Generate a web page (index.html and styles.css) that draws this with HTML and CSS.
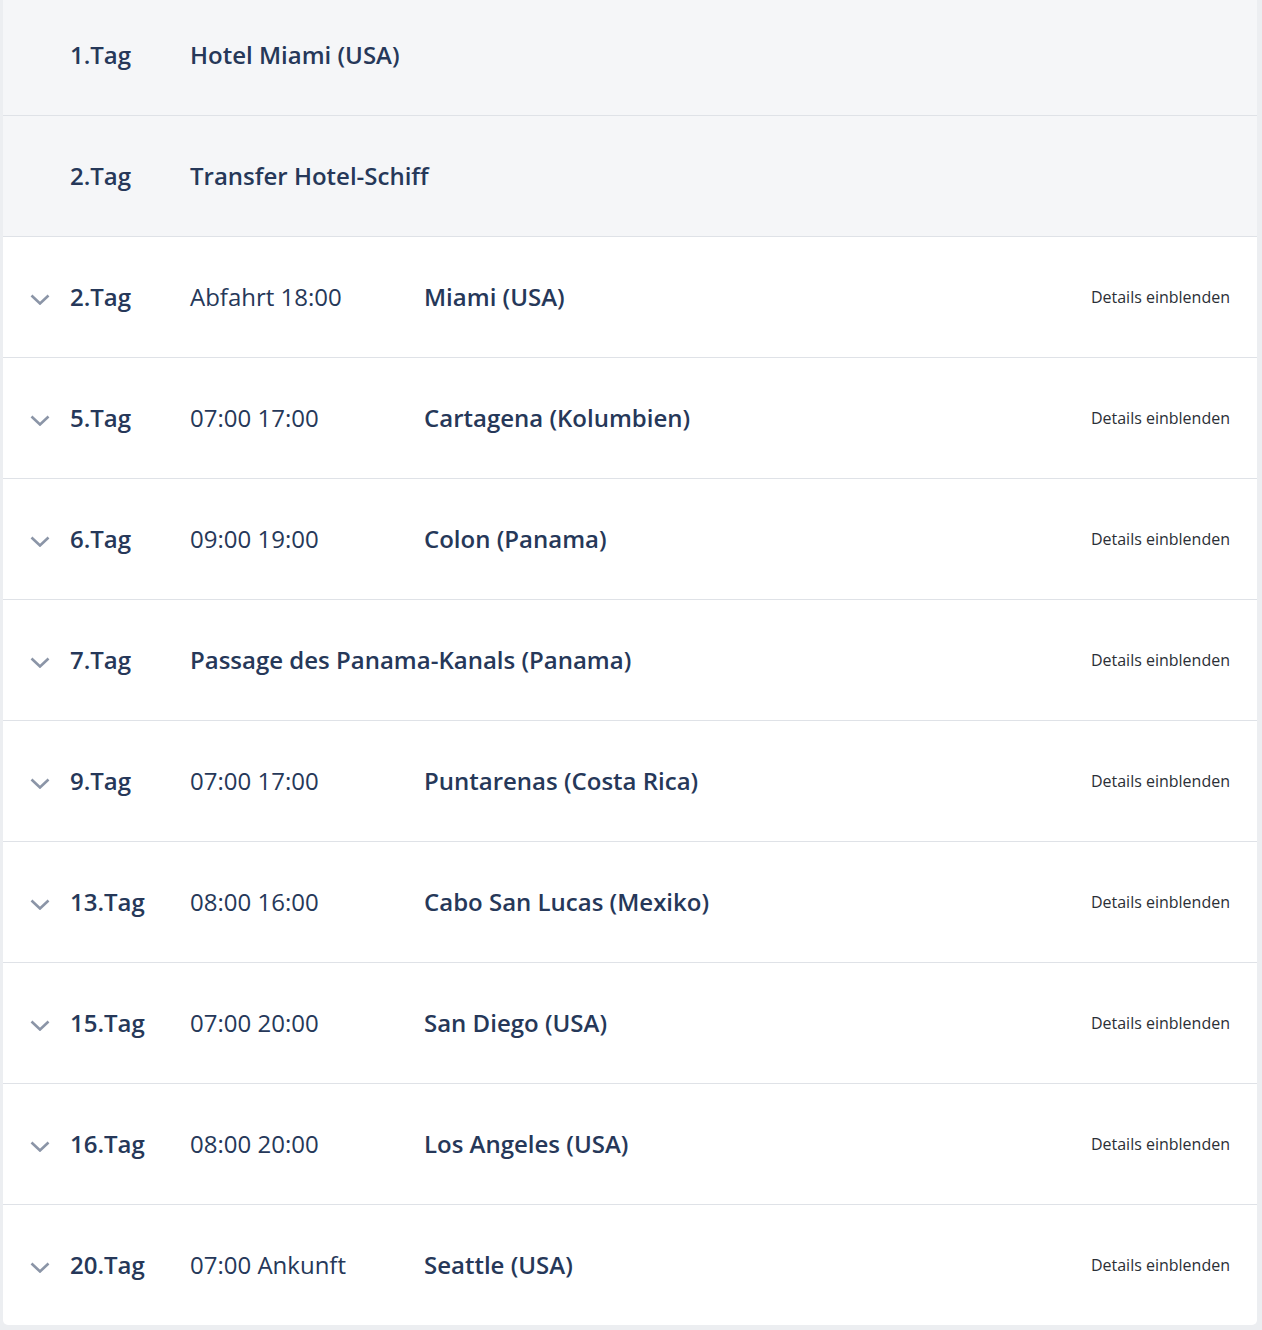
FILE: index.html
```html
<!DOCTYPE html>
<html lang="de">
<head>
<meta charset="utf-8">
<title>Reiseverlauf</title>
<link rel="stylesheet" href="styles.css">
</head>
<body>
<div class="card">
  <div class="row row--info">
    <span class="toggle"></span>
    <span class="day">1.Tag</span>
    <span class="title">Hotel Miami (USA)</span>
  </div>
  <div class="row row--info">
    <span class="toggle"></span>
    <span class="day">2.Tag</span>
    <span class="title">Transfer Hotel-Schiff</span>
  </div>
  <div class="row">
    <span class="toggle"><svg class="chev" viewBox="0 0 20 11"><path d="M1.5 1.5 L10 9.5 L18.5 1.5"/></svg></span>
    <span class="day">2.Tag</span>
    <span class="time">Abfahrt 18:00</span>
    <span class="place">Miami (USA)</span>
    <span class="details">Details einblenden</span>
  </div>
  <div class="row">
    <span class="toggle"><svg class="chev" viewBox="0 0 20 11"><path d="M1.5 1.5 L10 9.5 L18.5 1.5"/></svg></span>
    <span class="day">5.Tag</span>
    <span class="time">07:00 17:00</span>
    <span class="place">Cartagena (Kolumbien)</span>
    <span class="details">Details einblenden</span>
  </div>
  <div class="row">
    <span class="toggle"><svg class="chev" viewBox="0 0 20 11"><path d="M1.5 1.5 L10 9.5 L18.5 1.5"/></svg></span>
    <span class="day">6.Tag</span>
    <span class="time">09:00 19:00</span>
    <span class="place">Colon (Panama)</span>
    <span class="details">Details einblenden</span>
  </div>
  <div class="row">
    <span class="toggle"><svg class="chev" viewBox="0 0 20 11"><path d="M1.5 1.5 L10 9.5 L18.5 1.5"/></svg></span>
    <span class="day">7.Tag</span>
    <span class="title">Passage des Panama-Kanals (Panama)</span>
    <span class="details">Details einblenden</span>
  </div>
  <div class="row">
    <span class="toggle"><svg class="chev" viewBox="0 0 20 11"><path d="M1.5 1.5 L10 9.5 L18.5 1.5"/></svg></span>
    <span class="day">9.Tag</span>
    <span class="time">07:00 17:00</span>
    <span class="place">Puntarenas (Costa Rica)</span>
    <span class="details">Details einblenden</span>
  </div>
  <div class="row">
    <span class="toggle"><svg class="chev" viewBox="0 0 20 11"><path d="M1.5 1.5 L10 9.5 L18.5 1.5"/></svg></span>
    <span class="day">13.Tag</span>
    <span class="time">08:00 16:00</span>
    <span class="place">Cabo San Lucas (Mexiko)</span>
    <span class="details">Details einblenden</span>
  </div>
  <div class="row">
    <span class="toggle"><svg class="chev" viewBox="0 0 20 11"><path d="M1.5 1.5 L10 9.5 L18.5 1.5"/></svg></span>
    <span class="day">15.Tag</span>
    <span class="time">07:00 20:00</span>
    <span class="place">San Diego (USA)</span>
    <span class="details">Details einblenden</span>
  </div>
  <div class="row">
    <span class="toggle"><svg class="chev" viewBox="0 0 20 11"><path d="M1.5 1.5 L10 9.5 L18.5 1.5"/></svg></span>
    <span class="day">16.Tag</span>
    <span class="time">08:00 20:00</span>
    <span class="place">Los Angeles (USA)</span>
    <span class="details">Details einblenden</span>
  </div>
  <div class="row row--last">
    <span class="toggle"><svg class="chev" viewBox="0 0 20 11"><path d="M1.5 1.5 L10 9.5 L18.5 1.5"/></svg></span>
    <span class="day">20.Tag</span>
    <span class="time">07:00 Ankunft</span>
    <span class="place">Seattle (USA)</span>
    <span class="details">Details einblenden</span>
  </div>
</div>
</body>
</html>
```
FILE: styles.css
```css
html, body {
  margin: 0;
  padding: 0;
}
body {
  background: #eceef1;
  font-family: "Open Sans", "Noto Sans", sans-serif;
  color: #263859;
  padding: 0 5px 5px 3px;
}
.card {
  margin-top: -5px;
  background: #ffffff;
  border-radius: 0 0 5px 5px;
  overflow: hidden;
}
.row {
  display: flex;
  align-items: center;
  box-sizing: border-box;
  height: 121px;
  border-bottom: 1px solid #dfe2e7;
  padding: 0 27px 2px 0;
}
.row--info {
  background: #f5f6f8;
}
.row--last {
  border-bottom: none;
  height: 120px;
}
.toggle {
  width: 67px;
  flex: 0 0 67px;
  display: flex;
  justify-content: flex-start;
  padding-left: 27px;
  box-sizing: border-box;
  align-items: center;
}
.chev {
  width: 20px;
  height: 11px;
  margin-top: 6px;
}
.chev path {
  fill: none;
  stroke: #8b95a7;
  stroke-width: 2.6;
}
.day {
  flex: 0 0 120px;
  font-size: 24px;
  font-weight: 600;
}
.time {
  flex: 0 0 234px;
  font-size: 24px;
  font-weight: 400;
}
.place, .title {
  font-size: 24px;
  font-weight: 600;
}
.details {
  margin-left: auto;
  margin-top: 2px;
  font-size: 16px;
  color: #2b2f36;
}
```
